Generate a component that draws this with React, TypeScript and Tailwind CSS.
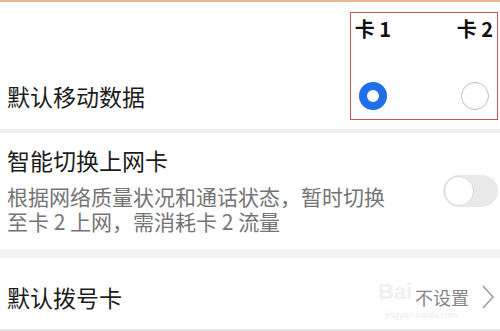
import React from "react";

const font = { fontFamily: '"Noto Sans CJK SC", "Noto Sans", sans-serif' };

function Radio({ checked }: { checked: boolean }) {
  return checked ? (
    <div className="w-[28px] h-[28px] rounded-full border-[8px] border-[#1f6fea] bg-white" />
  ) : (
    <div className="w-[28px] h-[28px] rounded-full border-[1.5px] border-[#bdbdbd] bg-white" />
  );
}

export default function App() {
  return (
    <div
      className="relative w-[500px] h-[331px] overflow-hidden bg-white text-[#1c1c1c] flex flex-col"
      style={font}
    >
      <div className="h-[2px] bg-[#e8b597]" />

      {/* Section 1 */}
      <div className="flex h-[127px] justify-between">
        <div className="pl-[7px] pt-[80px] text-[23px] leading-[28px]">默认移动数据</div>
        <div className="mt-[10px] mr-[2px] w-[148px] h-[108px] border border-[#d65550] flex justify-between">
          <div className="w-[44px] flex flex-col items-center">
            <div className="mt-[5px] text-[20px] leading-[22px] font-semibold text-[#111]">卡 1</div>
            <div className="mt-[42px]">
              <Radio checked />
            </div>
          </div>
          <div className="w-[44px] flex flex-col items-center">
            <div className="mt-[5px] text-[20px] leading-[22px] font-semibold text-[#111]">卡 2</div>
            <div className="mt-[42px]">
              <Radio checked={false} />
            </div>
          </div>
        </div>
      </div>

      <div className="h-[4px] bg-[#efefef]" />

      {/* Section 2 */}
      <div className="flex h-[116px] items-start justify-between">
        <div className="pl-[7px] pt-[13px]">
          <div className="text-[23px] leading-[28px]">智能切换上网卡</div>
          <div className="mt-[10px] text-[21px] leading-[25px] text-[#747474]">
            <div>根据网络质量状况和通话状态，暂时切换</div>
            <div>至卡 2 上网，需消耗卡 2 流量</div>
          </div>
        </div>
        <div className="mt-[42px] mr-[2px] w-[55px] h-[32px] rounded-full bg-[#e9e9e9] flex items-center pl-[1px]">
          <div className="w-[30px] h-[30px] rounded-full bg-white border border-[#d8d8d8]" />
        </div>
      </div>

      <div className="h-[9px] bg-[#f3f3f3]" />

      {/* Section 3 */}
      <div className="relative flex h-[71px] items-center justify-between pt-[6px]">
        <div className="pl-[7px] text-[23px] leading-[28px]">默认拨号卡</div>
        <div className="flex items-center pr-[5px]">
          <span className="text-[18px] leading-[24px] text-[#858585]">不设置</span>
          <svg width="14" height="26" viewBox="0 0 14 26" className="ml-[12px]">
            <path d="M2 2 L12 13 L2 24" fill="none" stroke="#9a9a9a" strokeWidth="1.5" />
          </svg>
        </div>
        <div
          className="absolute left-[378px] top-[22px] text-[22px] leading-[24px] text-[#f0f0f0] font-bold"
          style={{ fontFamily: '"Liberation Sans", sans-serif' }}
        >
          Bai
        </div>
        <div
          className="absolute left-[385px] top-[52px] text-[9px] leading-[10px] text-[#ededed]"
          style={{ fontFamily: '"Liberation Sans", sans-serif' }}
        >
          jingyan.baidu.com
        </div>
      </div>

      <div className="h-[2px] bg-[#e6e6e6]" />
    </div>
  );
}
